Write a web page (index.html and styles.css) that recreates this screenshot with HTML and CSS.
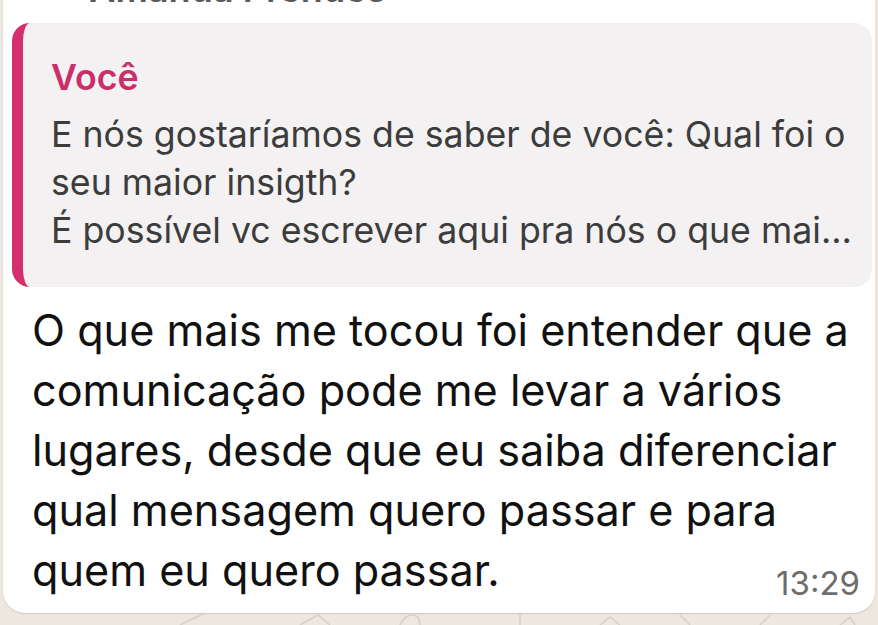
FILE: index.html
```html
<!DOCTYPE html>
<html lang="pt-BR">
<head>
<meta charset="utf-8">
<title>Mensagem</title>
<link rel="stylesheet" href="styles.css">
</head>
<body>
<div class="chat">
  <div class="bubble">
    <div class="sender">~ Amanda Prendes</div>
    <div class="quote">
      <div class="quote-author">Você</div>
      <div class="quote-text">E nós gostaríamos de saber de você: Qual foi o<br>seu maior insigth?<br>É possível vc escrever aqui pra nós o que mai…</div>
    </div>
    <div class="message">O que mais me tocou foi entender que a<br>comunicação pode me levar a vários<br>lugares, desde que eu saiba diferenciar<br>qual mensagem quero passar e para<br>quem eu quero passar.</div>
    <div class="meta"><span class="time">13:29</span></div>
  </div>
  <svg class="doodles" width="878" height="14" viewBox="0 0 878 14">
    <path d="M180 14 L205 2 M300 14 L318 4 L330 14 M400 14 Q405 4 412 4 Q420 4 420 14 M520 3 L520 14 M600 14 L610 6 L620 14 M680 4 L690 14 M760 14 L770 4 M840 14 L850 6 L855 14" fill="none" stroke="#d8d0c4" stroke-width="1.5"/>
  </svg>
</div>
</body>
</html>
```

FILE: styles.css
```css
html, body {
  margin: 0;
  padding: 0;
}
body {
  width: 878px;
  height: 625px;
  overflow: hidden;
  background: #ede7df;
  font-family: Inter, "Noto Sans", "Liberation Sans", sans-serif;
}
.chat {
  display: flex;
  flex-direction: column;
}
.bubble {
  margin: -29px 3px 0 3px;
  background: #ffffff;
  border-radius: 0 0 22px 22px;
  padding: 0 15px 16px 9px;
  box-shadow: 0 1px 1.5px rgba(0, 0, 0, 0.13);
}
.sender {
  font-size: 36px;
  line-height: 36px;
  font-weight: 600;
  color: #5a5a5a;
  padding-left: 44px;
}
.quote {
  margin: 16px -12px 0 0;
  background: #f3f1f2;
  border-left: 11px solid #d3306c;
  border-radius: 18px;
  padding: 30px 20px 33px 28px;
}
.quote-author {
  font-size: 35.7px;
  line-height: 48px;
  font-weight: 600;
  color: #c92f68;
  margin-bottom: 9px;
}
.quote-text {
  font-size: 35.7px;
  line-height: 48px;
  color: #3c3c3c;
  white-space: nowrap;
}
.message {
  margin-top: 13px;
  padding-left: 20px;
  font-size: 43.2px;
  line-height: 60px;
  color: #111111;
  white-space: nowrap;
}
.meta {
  display: flex;
  justify-content: flex-end;
  margin-top: -31px;
}
.time {
  font-size: 33px;
  line-height: 28px;
  color: #6d6d6d;
}
.doodles {
  display: block;
  margin-top: -2px;
}
```
